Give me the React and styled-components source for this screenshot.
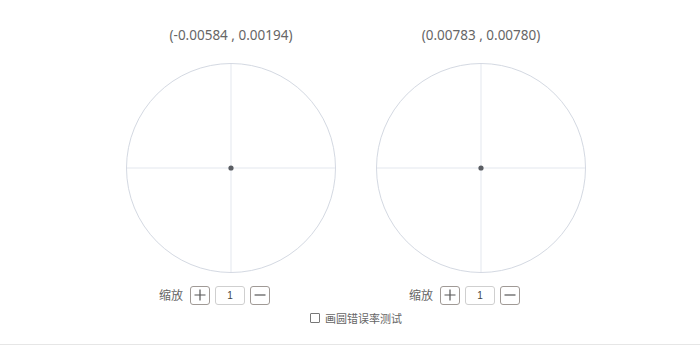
import styled, { createGlobalStyle } from "styled-components";

const Global = createGlobalStyle`
    html, body {
        margin: 0;
        padding: 0;
        background: #fff;
    }
    body {
        font-family: "Noto Sans", "Noto Sans CJK SC", sans-serif;
    }
`

const Page = styled.div`
    width: 700px;
    height: 345px;
    box-sizing: border-box;
    display: flex;
    flex-direction: column;
    align-items: center;
    border-bottom: 1px solid #e6e6e6;
`

const Row = styled.div`
    display: flex;
    gap: 40px;
    padding-left: 12px;
`

const Column = styled.div`
    width: 210px;
    display: flex;
    flex-direction: column;
    align-items: center;
`

const Coord = styled.div`
    margin-top: 25px;
    height: 20px;
    line-height: 20px;
    font-size: 13.5px;
    color: #666;
`

const Target = styled.svg`
    display: block;
    margin-top: 18px;
`

const Controls = styled.div`
    margin-top: 12px;
    margin-right: 33px;
    height: 20px;
    display: flex;
    align-items: center;
    gap: 5px;
`

const Label = styled.span`
    font-size: 12px;
    color: #666;
    margin-right: 2px;
`

const Btn = styled.button`
    width: 20px;
    height: 19px;
    padding: 0;
    border: 1px solid #a09a96;
    border-radius: 3px;
    background: #fff;
    color: #555;
    display: flex;
    align-items: center;
    justify-content: center;
    box-sizing: border-box;
`

const Num = styled.input`
    width: 30px;
    height: 19px;
    box-sizing: border-box;
    border: 1px solid #cfcfcf;
    border-radius: 3px;
    text-align: center;
    font-size: 10px;
    color: #444;
    padding: 0;
    font-family: "Liberation Sans", sans-serif;
`

const Check = styled.label`
    margin-top: 5px;
    margin-left: 12px;
    display: flex;
    align-items: center;
    gap: 5px;
    font-size: 11px;
    color: #666;
`

const Box = styled.span`
    width: 8px;
    height: 8px;
    border: 1px solid #777;
    border-radius: 1px;
    background: #fff;
`

const PlusIcon = () => (
    <svg width="12" height="12" viewBox="0 0 12 12">
        <path d="M6 0.5V11.5M0.5 6H11.5" stroke="#555" strokeWidth="1.2" />
    </svg>
)

const MinusIcon = () => (
    <svg width="12" height="12" viewBox="0 0 12 12">
        <path d="M0.5 6H11.5" stroke="#555" strokeWidth="1.2" />
    </svg>
)

function Panel({ x, y }) {
    return (
        <Column>
            <Coord>({x} , {y})</Coord>
            <Target width="210" height="210" viewBox="0 0 210 210">
                <line x1="105" y1="0.5" x2="105" y2="209.5" stroke="#e3e7ee" strokeWidth="1" />
                <line x1="0.5" y1="105" x2="209.5" y2="105" stroke="#e3e7ee" strokeWidth="1" />
                <circle cx="105" cy="105" r="104.5" fill="none" stroke="#d4d9e2" strokeWidth="1" />
                <circle cx="105" cy="105" r="2.6" fill="#5a5d63" />
            </Target>
            <Controls>
                <Label>缩放</Label>
                <Btn><PlusIcon /></Btn>
                <Num value="1" readOnly />
                <Btn><MinusIcon /></Btn>
            </Controls>
        </Column>
    )
}

export default function App() {
    return (
        <>
            <Global />
            <Page>
                <Row>
                    <Panel x="-0.00584" y="0.00194" />
                    <Panel x="0.00783" y="0.00780" />
                </Row>
                <Check>
                    <Box />
                    画圆错误率测试
                </Check>
            </Page>
        </>
    )
}
